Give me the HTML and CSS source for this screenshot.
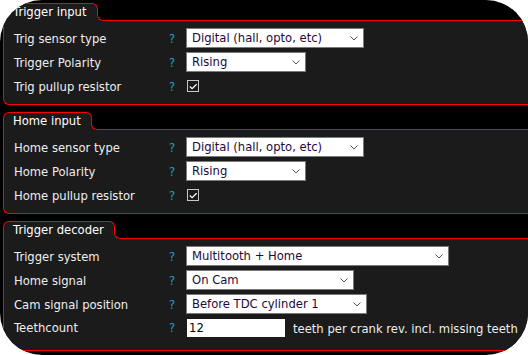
FILE: index.html
```html
<!DOCTYPE html>
<html lang="en">
<head>
    <meta charset="UTF-8">
    <title>Trigger settings</title>
    <link rel="stylesheet" href="styles.css">
</head>
<body>
    <div class="frame">

        <section class="group">
            <div class="group-head">
                <span class="tab">Trigger input</span>
                <span class="tab-rest"></span>
            </div>
            <div class="group-body">
                <div class="row">
                    <span class="label">Trig sensor type</span>
                    <span class="help">?</span>
                    <div class="select" style="width: 178px">
                        <span>Digital (hall, opto, etc)</span>
                        <svg class="chevron" width="8" height="5" viewBox="0 0 8 5"><path d="M0.5 0.5 L4 4 L7.5 0.5" /></svg>
                    </div>
                </div>
                <div class="row">
                    <span class="label">Trigger Polarity</span>
                    <span class="help">?</span>
                    <div class="select" style="width: 120px">
                        <span>Rising</span>
                        <svg class="chevron" width="8" height="5" viewBox="0 0 8 5"><path d="M0.5 0.5 L4 4 L7.5 0.5" /></svg>
                    </div>
                </div>
                <div class="row">
                    <span class="label">Trig pullup resistor</span>
                    <span class="help">?</span>
                    <span class="check">
                        <svg width="11" height="11" viewBox="0 0 11 11"><path d="M2 5.5 L4.5 8 L9.5 3" /></svg>
                    </span>
                </div>
            </div>
        </section>

        <section class="group">
            <div class="group-head">
                <span class="tab">Home input</span>
                <span class="tab-rest"></span>
            </div>
            <div class="group-body">
                <div class="row">
                    <span class="label">Home sensor type</span>
                    <span class="help">?</span>
                    <div class="select" style="width: 178px">
                        <span>Digital (hall, opto, etc)</span>
                        <svg class="chevron" width="8" height="5" viewBox="0 0 8 5"><path d="M0.5 0.5 L4 4 L7.5 0.5" /></svg>
                    </div>
                </div>
                <div class="row">
                    <span class="label">Home Polarity</span>
                    <span class="help">?</span>
                    <div class="select" style="width: 120px">
                        <span>Rising</span>
                        <svg class="chevron" width="8" height="5" viewBox="0 0 8 5"><path d="M0.5 0.5 L4 4 L7.5 0.5" /></svg>
                    </div>
                </div>
                <div class="row">
                    <span class="label">Home pullup resistor</span>
                    <span class="help">?</span>
                    <span class="check">
                        <svg width="11" height="11" viewBox="0 0 11 11"><path d="M2 5.5 L4.5 8 L9.5 3" /></svg>
                    </span>
                </div>
            </div>
        </section>

        <section class="group">
            <div class="group-head">
                <span class="tab">Trigger decoder</span>
                <span class="tab-rest"></span>
            </div>
            <div class="group-body">
                <div class="row">
                    <span class="label">Trigger system</span>
                    <span class="help">?</span>
                    <div class="select" style="width: 263px">
                        <span>Multitooth + Home</span>
                        <svg class="chevron" width="8" height="5" viewBox="0 0 8 5"><path d="M0.5 0.5 L4 4 L7.5 0.5" /></svg>
                    </div>
                </div>
                <div class="row">
                    <span class="label">Home signal</span>
                    <span class="help">?</span>
                    <div class="select" style="width: 168px">
                        <span>On Cam</span>
                        <svg class="chevron" width="8" height="5" viewBox="0 0 8 5"><path d="M0.5 0.5 L4 4 L7.5 0.5" /></svg>
                    </div>
                </div>
                <div class="row">
                    <span class="label">Cam signal position</span>
                    <span class="help">?</span>
                    <div class="select" style="width: 181px">
                        <span>Before TDC cylinder 1</span>
                        <svg class="chevron" width="8" height="5" viewBox="0 0 8 5"><path d="M0.5 0.5 L4 4 L7.5 0.5" /></svg>
                    </div>
                </div>
                <div class="row row-last">
                    <span class="label">Teethcount</span>
                    <span class="help">?</span>
                    <input class="number" type="text" value="12">
                    <span class="unit">teeth per crank rev. incl. missing teeth</span>
                </div>
            </div>
        </section>

    </div>
</body>
</html>
```

FILE: styles.css
```css
body {
    margin: 0;
    background: #ffffff;
    font-family: "DejaVu Sans", Verdana, sans-serif;
    font-size: 11.6px;
}
.frame {
    width: 528px;
    height: 355px;
    box-sizing: border-box;
    padding: 3px 0 0 3px;
    background: #000000;
    border-radius: 42px;
    overflow: hidden;
}
.group {
    width: calc(100% + 20px);
    margin-bottom: 7px;
}

/* tab on top of every group */
.group-head {
    display: flex;
    height: 18px;
}
.tab {
    position: relative;
    height: 17px;
    line-height: 17px;
    padding: 0 10px 0 9px;
    color: #ffffff;
    background: #1b1b1b;
    border: 1px solid #ff0000;
    border-bottom: none;
    border-radius: 6px 6px 0 0;
}
.tab::after {
    content: "";
    position: absolute;
    right: -7px;
    bottom: 0;
    width: 7px;
    height: 7px;
    background: #1b1b1b;
}
.tab-rest {
    position: relative;
    z-index: 1;
    flex: 1;
    margin: 6px 0 0 -1px;
    background: #000000;
    border-left: 1px solid #ff0000;
    border-bottom: 1px solid #ff0000;
    border-bottom-left-radius: 6px;
}

.group-body {
    display: flex;
    flex-direction: column;
    gap: 4px;
    padding: 7px 0 8px 10px;
    background: #1b1b1b;
    border-left: 1px solid #ff0000;
    border-bottom: 1px solid #ff0000;
    border-bottom-left-radius: 6px;
}
.row {
    display: flex;
    align-items: center;
    height: 20px;
}
.row-last {
    height: 23px;
    align-items: flex-start;
    padding-top: 1px;
}
.label {
    width: 155px;
    color: #eeeeee;
    padding-top: 2px;
}
.help {
    width: 17px;
    color: #1a9fd6;
    padding-top: 2px;
}

.select {
    display: flex;
    align-items: center;
    justify-content: space-between;
    box-sizing: border-box;
    height: 20px;
    padding: 0 5px 0 5px;
    background: #ffffff;
    border: 1px solid #7a7a7a;
    color: #1e0a3a;
}
.chevron path {
    fill: none;
    stroke: #555555;
    stroke-width: 1;
}
.check {
    display: flex;
    align-items: center;
    justify-content: center;
    box-sizing: border-box;
    width: 12px;
    height: 12px;
    margin-left: 1px;
    border: 1px solid #c8c8c8;
    background: #1b1b1b;
}
.check path {
    fill: none;
    stroke: #ffffff;
    stroke-width: 1.3;
}
.number {
    box-sizing: border-box;
    width: 98px;
    height: 18px;
    margin: 0 0 0 1px;
    padding: 0 2px;
    border: none;
    outline: none;
    background: #ffffff;
    color: #000000;
    font-family: inherit;
    font-size: 11.6px;
}
.unit {
    margin-left: 8px;
    color: #eeeeee;
    padding-top: 3px;
}
```
